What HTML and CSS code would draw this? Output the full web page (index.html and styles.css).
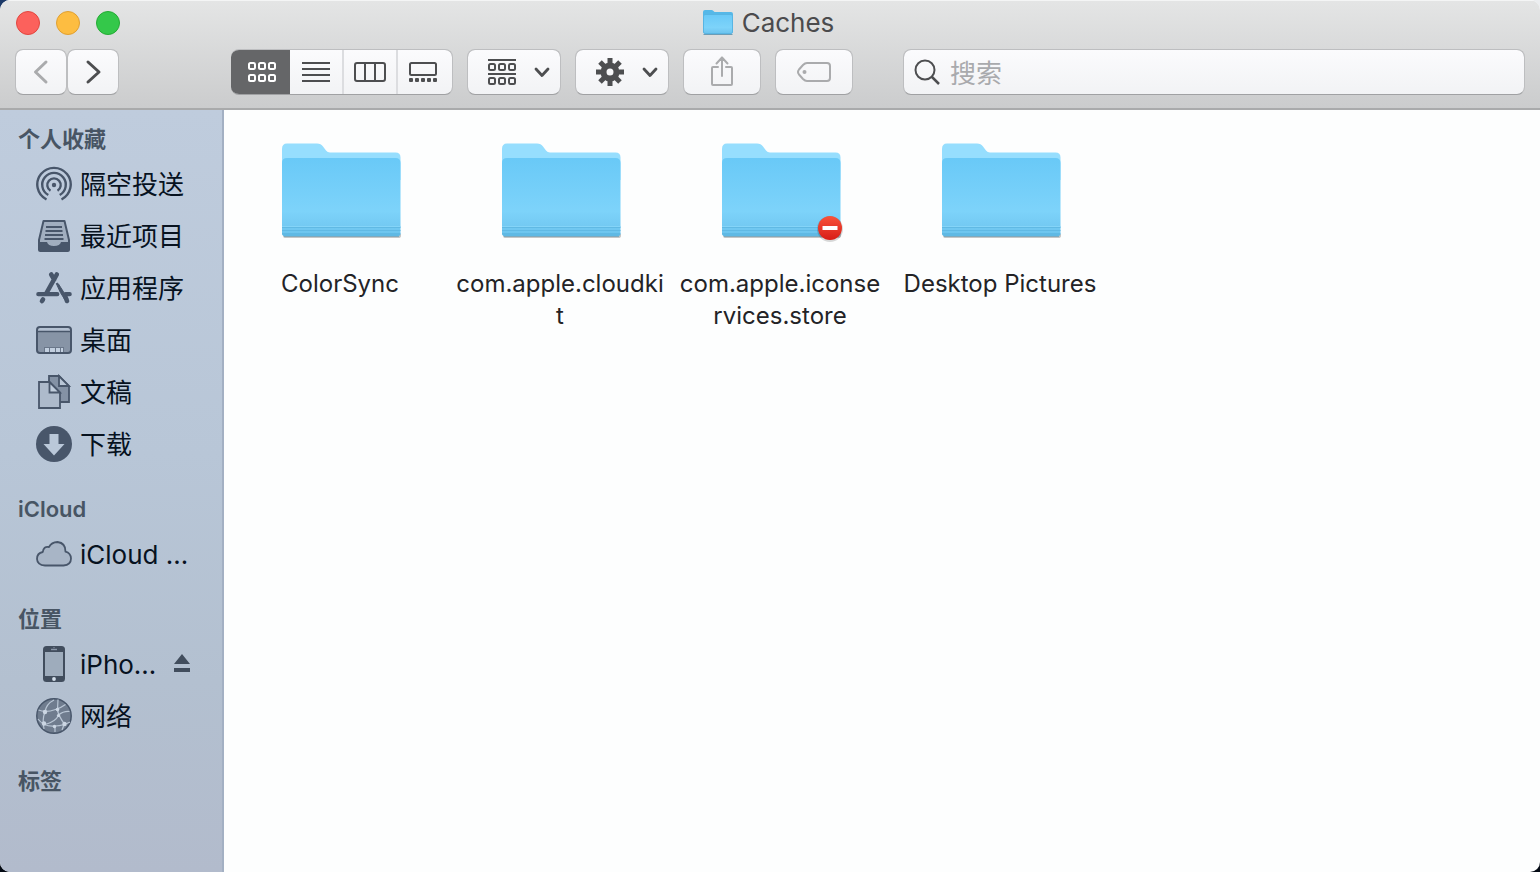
FILE: index.html
```
<!DOCTYPE html>
<html lang="zh-CN">
<head>
<meta charset="utf-8">
<meta name="viewport" content="width=device-width, initial-scale=1">
<title>Caches</title>
<link rel="stylesheet" href="styles.css">
</head>
<body>
<svg class="defs" aria-hidden="true">
  <defs>
    <linearGradient id="front" x1="0" y1="0" x2="0" y2="1">
      <stop offset="0" stop-color="#69c9f7"/>
      <stop offset="0.68" stop-color="#7dd3fa"/>
      <stop offset="0.86" stop-color="#74caf3"/>
      <stop offset="1" stop-color="#6ac3ed"/>
    </linearGradient>
    <linearGradient id="stop-red" x1="0" y1="0" x2="0" y2="1">
      <stop offset="0" stop-color="#f8533a"/>
      <stop offset="1" stop-color="#d81c16"/>
    </linearGradient>
  </defs>
  <symbol id="folder" viewBox="0 0 128 104">
    <path d="M7 94h118v2q0 2-3 2H10q-3 0-3-2z" fill="#000" opacity=".22"/>
    <path d="M6 20V9q0-5.500 5-5.500H41q4 0 6 3l3 4q1.500 2 4 2h65.500q5 0 5 5V40H6z" fill="#96defe"/>
    <path d="M6 23q0-5 5-5h108.500q5 0 5 5v70q0 3-3 3H9q-3 0-3-3z" fill="url(#front)"/>
    <path d="M6 86.500h118.500" stroke="#84d4f8"/>
    <path d="M6 87.500h118.500M6 90.500h118.500" stroke="#60b9e4"/>
    <path d="M6 93h118.500q0 3-3 3H9q-3 0-3-3z" fill="#5fb9e4"/>
    <path d="M8 96.500h115" stroke="#7fa9bd"/>
  </symbol>
</svg>

<div class="window">
  <header class="chrome">
    <div class="titlebar">
      <div class="lights">
        <button class="light close" type="button" aria-label="关闭"></button>
        <button class="light minimize" type="button" aria-label="最小化"></button>
        <button class="light zoom" type="button" aria-label="缩放"></button>
      </div>
      <h1 class="title">
        <svg width="32" height="28" viewBox="0 0 32 28" aria-hidden="true">
          <path d="M1 3q0-2 2-2h6.500q1 0 2 1l1 1H29q2 0 2 2v10H1z" fill="#55b8e8"/>
          <path d="M1.500 7q0-1.500 1.500-1.500h26q1.500 0 1.500 1.500v16q0 1.500-1.500 1.500H3q-1.500 0-1.500-1.500z" fill="url(#front)" stroke="#58b5e3"/>
          <path d="M1.500 25.500h29" stroke="#6d9cb4"/>
        </svg>
        Caches
      </h1>
    </div>
    <div class="toolbar">
      <div class="nav">
        <button class="btn nav-btn dim" type="button" aria-label="后退"><svg width="50" height="44" viewBox="0 0 50 44"><path d="M30 12 19.500 22 30 32" fill="none" stroke="currentColor" stroke-width="3" stroke-linecap="round" stroke-linejoin="round"/></svg></button>
        <button class="btn nav-btn" type="button" aria-label="前进"><svg width="50" height="44" viewBox="0 0 50 44"><path d="M20 12 31 22 20 32" fill="none" stroke="currentColor" stroke-width="3" stroke-linecap="round" stroke-linejoin="round"/></svg></button>
      </div>
      <div class="views" role="group" aria-label="显示方式">
        <button class="view active" type="button" aria-pressed="true" aria-label="图标">
          <svg width="32" height="24" viewBox="0 0 32 24" fill="none" stroke="currentColor" stroke-width="2"><rect x="3" y="3" width="6" height="6" rx="1.500"/><rect x="13" y="3" width="6" height="6" rx="1.500"/><rect x="23" y="3" width="6" height="6" rx="1.500"/><rect x="3" y="15" width="6" height="6" rx="1.500"/><rect x="13" y="15" width="6" height="6" rx="1.500"/><rect x="23" y="15" width="6" height="6" rx="1.500"/></svg>
        </button>
        <button class="view" type="button" aria-pressed="false" aria-label="列表">
          <svg width="32" height="24" viewBox="0 0 32 24" stroke="currentColor" stroke-width="2"><path d="M2 3h28M2 9h28M2 15h28M2 21h28"/></svg>
        </button>
        <button class="view" type="button" aria-pressed="false" aria-label="分栏">
          <svg width="32" height="24" viewBox="0 0 32 24" fill="none" stroke="currentColor" stroke-width="2"><rect x="1" y="3" width="30" height="18" rx="2"/><path d="M11 3v18M21 3v18"/></svg>
        </button>
        <button class="view" type="button" aria-pressed="false" aria-label="画廊">
          <svg width="32" height="24" viewBox="0 0 32 24"><rect x="3" y="3" width="26" height="12" rx="1.500" fill="none" stroke="currentColor" stroke-width="2"/><g fill="currentColor"><rect x="2" y="18" width="4" height="4" rx="1"/><rect x="8" y="18" width="4" height="4" rx="1"/><rect x="14" y="18" width="4" height="4" rx="1"/><rect x="20" y="18" width="4" height="4" rx="1"/><rect x="26" y="18" width="4" height="4" rx="1"/></g></svg>
        </button>
      </div>
      <button class="btn menu-btn" type="button" aria-haspopup="true" aria-label="分组">
        <svg width="28" height="28" viewBox="0 0 28 28" fill="none" stroke="currentColor" stroke-width="2"><path d="M0 2h28M0 16h28"/><rect x="1" y="6" width="6" height="6" rx="1.500"/><rect x="11" y="6" width="6" height="6" rx="1.500"/><rect x="21" y="6" width="6" height="6" rx="1.500"/><rect x="1" y="20" width="6" height="6" rx="1.500"/><rect x="11" y="20" width="6" height="6" rx="1.500"/><rect x="21" y="20" width="6" height="6" rx="1.500"/></svg>
        <svg width="16" height="12" viewBox="0 0 16 12"><path d="M2 3 8 9.500l6-6.500" fill="none" stroke="currentColor" stroke-width="2.800" stroke-linecap="round" stroke-linejoin="round"/></svg>
      </button>
      <button class="btn menu-btn" type="button" aria-haspopup="true" aria-label="操作">
        <svg width="28" height="28" viewBox="-14 -14 28 28" fill="none" stroke="currentColor"><circle r="6.500" stroke-width="6"/><path d="M0-9v-5M0 9v5M-9 0h-5M9 0h5" stroke-width="5"/><path d="M-6-6l-4-4M6-6l4-4M-6 6l-4 4M6 6l4 4" stroke-width="5"/></svg>
        <svg width="16" height="12" viewBox="0 0 16 12"><path d="M2 3 8 9.500l6-6.500" fill="none" stroke="currentColor" stroke-width="2.800" stroke-linecap="round" stroke-linejoin="round"/></svg>
      </button>
      <button class="btn tool-btn dim" type="button" aria-label="共享">
        <svg width="24" height="32" viewBox="0 0 24 32" fill="none" stroke="currentColor" stroke-width="2" stroke-linecap="round" stroke-linejoin="round"><path d="M8 11H3q-1 0-1 1v16q0 1 1 1h18q1 0 1-1V12q0-1-1-1h-5M12 20V1.500M6.500 7.500 12 1.500l5.500 6"/></svg>
      </button>
      <button class="btn tool-btn dim" type="button" aria-label="编辑标签">
        <svg width="36" height="22" viewBox="0 0 36 22"><path d="M11 2h20q3 0 3 3v12q0 3-3 3H11q-2 0-4-2l-4-4.500q-2-2.500 0-5L7 4q2-2 4-2z" fill="none" stroke="currentColor" stroke-width="2"/><circle cx="8.500" cy="11" r="2" fill="currentColor"/></svg>
      </button>
      <label class="search">
        <svg width="28" height="28" viewBox="0 0 28 28" fill="none" stroke="currentColor" stroke-width="2" aria-hidden="true"><circle cx="12" cy="12" r="9.500"/><path d="M18.500 18.500 26 26" stroke-width="2.500"/></svg>
        <input type="search" placeholder="搜索" aria-label="搜索">
      </label>
    </div>
  </header>

  <div class="body">
    <nav class="sidebar" aria-label="边栏">
      <section class="group">
        <h2>个人收藏</h2>
        <a class="item" href="#airdrop">
          <svg width="36" height="36" viewBox="0 0 36 36" fill="none" stroke="#48566a" stroke-width="2.400" aria-hidden="true"><circle cx="18" cy="19" r="2.200" fill="#48566a" stroke="none"/><path d="M10.500 33.500A16.700 16.700 0 1 1 25.500 33.500"/><path d="M12.300 29A11.800 11.800 0 1 1 23.700 29"/><path d="M14.500 24.800A6.700 6.700 0 1 1 21.500 24.800"/></svg>
          <span>隔空投送</span></a>
        <a class="item" href="#recents">
          <svg width="36" height="36" viewBox="0 0 36 36" aria-hidden="true"><path d="M8 3h20l5 20v9q0 2-2 2H5q-2 0-2-2v-9z" fill="#a1aebf"/><path d="M7.500 3h21L33 22v9.500q0 1.500-1.500 1.500h-27Q3 33 3 31.500V22z" fill="none" stroke="#48566a" stroke-width="2" stroke-linejoin="round"/><path d="M3 24h8q1 4 7 4t7-4h8v9H3z" fill="#48566a"/><path d="M10 9h16M9.500 13h17M9 17h18M8.500 21h19" stroke="#48566a" stroke-width="2"/></svg>
          <span>最近项目</span></a>
        <a class="item" href="#applications">
          <svg width="36" height="36" viewBox="0 0 36 36" fill="none" stroke="#48566a" stroke-linecap="round" aria-hidden="true"><path d="M20.800 4.500 10.500 23M7 29.500l-1 1.500M15.200 4.500l3 5M29.500 27l1.500 4" stroke-width="4.600"/><path d="M2.300 24.200h19M29.500 24.200h4.200" stroke-width="4.200"/><path d="M20.500 13.500q1-1 2 .5L32 29l-3 1q-5-7-8.500-16z" fill="#48566a" stroke-width="1"/></svg>
          <span>应用程序</span></a>
        <a class="item" href="#desktop">
          <svg width="36" height="36" viewBox="0 0 36 36" aria-hidden="true"><rect x="1" y="5" width="34" height="26" rx="3" fill="#8794a6"/><path d="M2 9V7q0-1 1-1h30q1 0 1 1v2z" fill="#b4c1d2"/><rect x="1" y="5" width="34" height="26" rx="3" fill="none" stroke="#48566a" stroke-width="2"/><path d="M1 9.500h34" stroke="#48566a" stroke-width="1.600"/><path d="M8 25h20v5H8z" fill="#6a778a"/><path d="M9 26h4v4H9zM14 26h5v4h-5zM20 26h4v4h-4zM25 26h2v4h-2z" fill="#c2cfdf"/></svg>
          <span>桌面</span></a>
        <a class="item" href="#documents">
          <svg width="36" height="36" viewBox="0 0 36 36" stroke="#48566a" stroke-width="1.800" aria-hidden="true"><path d="M13 2h10l10 10v16H13z" fill="#8492a5"/><path d="M23 2v10h10z" fill="#b9c6d6"/><path d="M3 8h10.500L24 18.500V34H3z" fill="#adbacb"/><path d="M13.500 8v10.500H24z" fill="#c0cddc"/></svg>
          <span>文稿</span></a>
        <a class="item" href="#downloads">
          <svg width="36" height="36" viewBox="0 0 36 36" aria-hidden="true"><circle cx="18" cy="18" r="18" fill="#48566a"/><path d="M13.500 8h9v10h6L18 29.500 7.500 18h6z" fill="#bac8d9"/></svg>
          <span>下载</span></a>
      </section>
      <section class="group">
        <h2>iCloud</h2>
        <a class="item" href="#icloud">
          <svg width="36" height="36" viewBox="0 0 36 36" aria-hidden="true"><path d="M9 29.500h18.500q7.500-.5 7.500-7-.3-5.500-5.500-6.800.3-8.700-8-9.700-6 .2-8.500 5-5.500-1-6.200 5-5.800 1-5.800 7 .3 6 8 6.500z" fill="#a8b5c6" stroke="#48566a" stroke-width="1.800" stroke-linejoin="round"/></svg>
          <span>iCloud …</span></a>
      </section>
      <section class="group">
        <h2>位置</h2>
        <div class="device">
          <a class="item" href="#iphone">
            <svg width="36" height="36" viewBox="0 0 36 36" aria-hidden="true"><rect x="7" y="0" width="22" height="36" rx="3.500" fill="#414d5d"/><path d="M9 6h18v24H9z" fill="#9eacbc"/><path d="M15 3.500h6" stroke="#8996a7" stroke-width="1.400"/><circle cx="18" cy="1.600" r=".7" fill="#8996a7"/><circle cx="18" cy="33" r="1.900" fill="#d3deea"/></svg>
            <span>iPho…</span></a>
          <button class="eject" type="button" aria-label="推出"><svg width="16" height="20" viewBox="0 0 16 20" fill="#414d5d"><path d="M8 0l8 10H0zM0 14h16v4H0z"/></svg></button>
        </div>
        <a class="item" href="#network">
          <svg width="36" height="36" viewBox="0 0 36 36" aria-hidden="true"><circle cx="18" cy="18" r="17.200" fill="#6f7c8e" stroke="#48566a" stroke-width="1.500"/><g fill="none" stroke="#b9c6d5" stroke-width="1.200"><path d="M2.500 12q7 3 17-.5 6-2 10-5M9 14Q10 6 18 2M9 14q-3 7-1 17M21 11q2 8 7.500 15M22 1.500q-1 8 .5 16-3 6-13 9M2 21q6 8 17 7 9-.5 15-4M22.500 17q5-4 11-3.500M19 28v6M28 26q-1 4-2 6"/></g><g fill="#cbd6e3"><circle cx="9" cy="14" r="2.200"/><circle cx="21.500" cy="11.500" r="1.800"/><circle cx="22.500" cy="17.500" r="1.600"/><circle cx="8" cy="25.500" r="2.200"/><circle cx="18.500" cy="28.500" r="1.700"/><circle cx="28.500" cy="26" r="2.200"/></g></svg>
          <span>网络</span></a>
      </section>
      <section class="group">
        <h2>标签</h2>
      </section>
    </nav>

    <main class="files">
      <a class="file" href="#colorsync"><span class="icon"><svg width="128" height="104" aria-hidden="true"><use href="#folder"/></svg></span><span class="name">ColorSync</span></a>
      <a class="file" href="#cloudkit"><span class="icon"><svg width="128" height="104" aria-hidden="true"><use href="#folder"/></svg></span><span class="name">com.apple.cloudki<wbr>t</span></a>
      <a class="file" href="#iconservices"><span class="icon"><svg width="128" height="104" aria-hidden="true"><use href="#folder"/></svg><svg class="badge" width="28" height="30" viewBox="0 0 28 30" aria-hidden="true"><circle cx="14" cy="15" r="13" fill="#000" opacity=".15"/><circle cx="14" cy="14" r="12" fill="url(#stop-red)"/><path d="M6.500 12h15v4h-15z" fill="#fff"/></svg></span><span class="name">com.apple.iconse<wbr>rvices.store</span></a>
      <a class="file" href="#desktop-pictures"><span class="icon"><svg width="128" height="104" aria-hidden="true"><use href="#folder"/></svg></span><span class="name">Desktop Pictures</span></a>
    </main>
  </div>
</div>
</body>
</html>
```
FILE: styles.css
```
* {
  box-sizing: border-box;
}

body {
  margin: 0;
  background: linear-gradient(to right, #1d3a68 50%, #eceef0 50%) top / 100% 50% no-repeat #040a14;
  font-family: Inter, "Noto Sans CJK SC", sans-serif;
  font-size: 24px;
  color: #232326;
}

button {
  margin: 0;
  padding: 0;
  border: 0;
  background: none;
  font: inherit;
  color: inherit;
}

a {
  color: inherit;
  text-decoration: none;
}

svg {
  display: block;
  flex: none;
}

.defs {
  position: absolute;
  width: 0;
  height: 0;
}

.window {
  display: flex;
  flex-direction: column;
  min-height: 100vh;
  border-radius: 10px;
  overflow: hidden;
  background: #fdfefe;
}

/* Title bar and toolbar */

.chrome {
  padding: 0 15px 13px;
  background: linear-gradient(#e4e5e5, #cbcccd);
  border-top: 1px solid #f4f5f5;
  border-bottom: 2px solid #a9aaab;
}

.titlebar {
  display: grid;
  grid-template-columns: 1fr auto 1fr;
  align-items: center;
  height: 44px;
}

.lights {
  display: flex;
  gap: 16px;
  padding-left: 1px;
}

.light {
  width: 24px;
  height: 24px;
  border: 1px solid;
  border-radius: 50%;
}

.close {
  background: #fc615c;
  border-color: #e2463f;
}

.minimize {
  background: #fdbd41;
  border-color: #e0a032;
}

.zoom {
  background: #34c84a;
  border-color: #24ab34;
}

.title {
  display: flex;
  align-items: center;
  gap: 8px;
  margin: 0;
  padding-right: 4px;
  font-size: 26px;
  font-weight: 400;
  line-height: 32px;
  color: #4b4b4d;
}

.toolbar {
  display: flex;
  gap: 14px;
  margin-top: 4px;
  height: 46px;
  color: #4d4e50;
}

.nav {
  display: flex;
  margin-right: 98px;
}

.btn,
.views,
.search {
  display: flex;
  align-items: center;
  border: 1px solid #bdbec0;
  border-bottom-color: #a0a1a3;
  border-radius: 8px;
  background: linear-gradient(#fbfbfd, #f2f3f5);
  background-clip: padding-box;
}

.btn {
  justify-content: center;
}

.nav-btn {
  width: 52px;
}

.dim {
  color: #aaabad;
}

.views {
  overflow: hidden;
  border-left: 0;
}

.view {
  display: flex;
  align-items: center;
  justify-content: center;
  width: 54px;
  height: 100%;
  border-right: 2px solid #dcdde0;
}

.view.active {
  width: 59px;
  padding-left: 2px;
  background: #656668;
  border: 0;
  color: #fff;
}

.view:last-child {
  padding-right: 4px;
  border: 0;
}

.menu-btn {
  gap: 18px;
  width: 94px;
  padding-left: 10px;
}

.tool-btn {
  width: 78px;
}

.search {
  flex: 1;
  gap: 9px;
  margin-left: 36px;
  padding-left: 9px;
}

.search input {
  flex: 1;
  min-width: 0;
  height: 100%;
  padding: 0 0 2px;
  border: 0;
  outline: 0;
  background: none;
  font: 26px "Noto Sans CJK SC", sans-serif;
}

.search input::placeholder {
  color: #a9aaad;
}

/* Sidebar and files */

.body {
  display: flex;
  flex: 1;
}

.sidebar {
  display: flex;
  flex-direction: column;
  gap: 20px;
  flex: none;
  width: 224px;
  padding-top: 10px;
  border-right: 2px solid #a3b0c3;
  background: linear-gradient(#bfccdd, #b8c6d7 45%, #b3c0d0 75%, #b2bbcc);
}

.group h2 {
  margin: 0;
  padding: 2px 18px;
  font-size: 22px;
  font-weight: 600;
  line-height: 34px;
  color: #485564;
}

.item {
  display: flex;
  align-items: center;
  gap: 8px;
  height: 52px;
  padding-left: 36px;
  font-size: 26px;
  line-height: 36px;
  color: #07121f;
}

.item span {
  padding-top: 2px;
}

.device {
  display: flex;
  align-items: center;
  gap: 18px;
}

.files {
  display: grid;
  flex: 1;
  grid-template-columns: repeat(auto-fill, 220px);
  align-content: start;
  padding: 30px 6px;
}

.file {
  display: flex;
  flex-direction: column;
  align-items: center;
  gap: 24px;
}

.icon {
  position: relative;
}

.badge {
  position: absolute;
  right: 0;
  bottom: 0;
}

.name {
  max-width: 210px;
  line-height: 32px;
  text-align: center;
}
```
